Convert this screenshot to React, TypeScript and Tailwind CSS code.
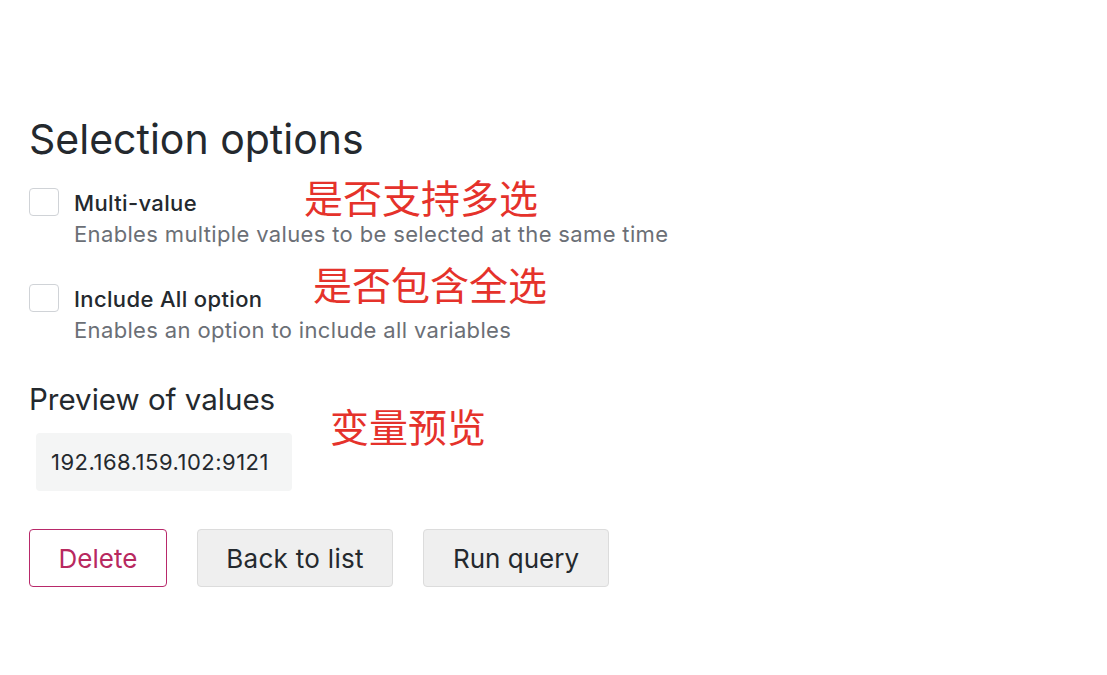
import React from "react";

const font = { fontFamily: "Inter, 'Noto Sans CJK SC', sans-serif" };

function Note({ text, className }: { text: string; className: string }) {
  // красные пометки поверх скриншота
  return (
    <span
      className={`absolute whitespace-nowrap text-[39px] leading-none text-[#e5322b] ${className}`}
      style={{ fontFamily: "'Noto Sans CJK SC', sans-serif" }}
    >
      {text}
    </span>
  );
}

function Option({ label, desc }: { label: string; desc: string }) {
  return (
    <div className="flex gap-[15px]">
      <div className="h-[28px] w-[30px] shrink-0 rounded-[4px] border border-[#d0d3d7] bg-white" />
      <div className="flex flex-col">
        <span className="mt-[1px] text-[22px] font-medium leading-[28px] tracking-[0.35px] text-[#24292e]">{label}</span>
        <span className="mt-[3px] text-[22px] leading-[28px] tracking-[0.35px] text-[#6b6f76]">{desc}</span>
      </div>
    </div>
  );
}

export default function App() {
  return (
    <div className="relative min-h-[675px] w-full bg-white pl-[29px] pt-[113px]" style={font}>
      <h2 className="text-[41px] leading-[52px] text-[#24292e]">Selection options</h2>

      <div className="mt-[23px] flex flex-col gap-[36px]">
        <Option label="Multi-value" desc="Enables multiple values to be selected at the same time" />
        <Option label="Include All option" desc="Enables an option to include all variables" />
      </div>

      <h3 className="mt-[37px] text-[29.5px] leading-[36px] text-[#24292e]">Preview of values</h3>

      <div className="mt-[16px] ml-[7px] flex h-[58px] w-[256px] items-center rounded-[4px] bg-[#f4f5f5] px-[15px] text-[22px] tracking-[0.5px] text-[#24292e]">
        192.168.159.102:9121
      </div>

      <div className="mt-[38px] flex gap-[30px]">
        <button className="h-[58px] w-[138px] rounded-[4px] border border-[#b8296a] bg-white text-[26px] text-[#b8295f]">
          Delete
        </button>
        <button className="h-[58px] w-[196px] rounded-[4px] border border-[#dcdcdc] bg-[#efefef] text-[26px] tracking-[0.3px] text-[#24292e]">
          Back to list
        </button>
        <button className="h-[58px] w-[186px] rounded-[4px] border border-[#dcdcdc] bg-[#efefef] text-[26px] text-[#24292e]">
          Run query
        </button>
      </div>

      <Note text="是否支持多选" className="left-[304px] top-[177px]" />
      <Note text="是否包含全选" className="left-[313px] top-[264px]" />
      <Note text="变量预览" className="left-[330px] top-[406px]" />
    </div>
  );
}
